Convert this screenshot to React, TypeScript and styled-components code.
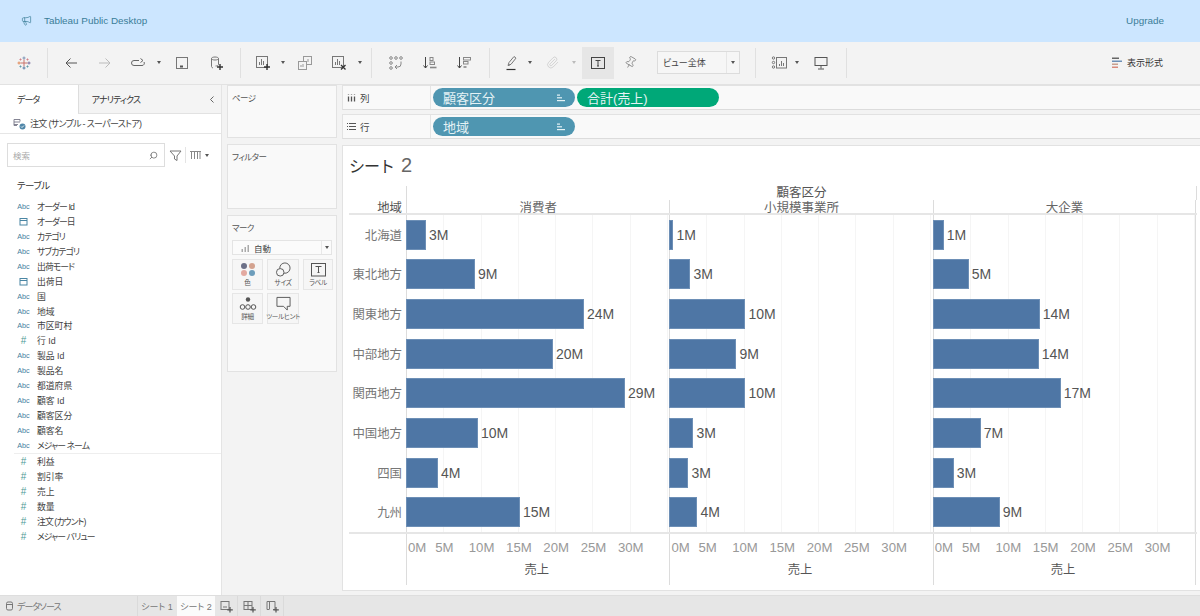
import React from 'react';
import styled, { createGlobalStyle } from 'styled-components';
import { Megaphone, Paperclip, Pin, Search } from 'lucide-react';

const CJK = `"Liberation Sans", "Noto Sans CJK JP", sans-serif`;

const GlobalStyle = createGlobalStyle`
  html, body {
    margin: 0;
    width: 1200px;
    height: 616px;
    overflow: hidden;
    background: #f3f3f3;
    font-family: ${CJK};
    font-feature-settings: "palt" 1;
  }
  * { box-sizing: border-box; }
`;

const Page = styled.div`
  display: grid;
  grid-template-rows: 42px 43px 510px 21px;
  width: 1200px;
  height: 616px;
`;

const TopBar = styled.div`
  display: flex;
  align-items: center;
  justify-content: space-between;
  padding: 0 36px 1px 21px;
  background: #cce6ff;
  color: #3a7d98;
  font-size: 9.9px;
`;

const TopBrand = styled.div`
  display: flex;
  align-items: center;
  gap: 12px;
`;

const Toolbar = styled.div`
  display: flex;
  align-items: center;
  padding: 0 37px 1px 7px;
  background: #f3f3f3;
  border-bottom: 1px solid #e2e2e2;
`;

const ToolButton = styled.div<{ $w?: number; $ml?: number; $active?: boolean }>`
  display: flex;
  align-items: center;
  justify-content: center;
  flex: none;
  width: ${(p) => p.$w ?? 34}px;
  height: 32px;
  margin-left: ${(p) => p.$ml ?? 0}px;
  background: ${(p) => (p.$active ? '#e6e6e6' : 'transparent')};
  color: #666;
`;

const ToolSep = styled.div<{ $w: number }>`
  flex: none;
  width: ${(p) => p.$w}px;
  height: 30px;
  display: flex;
  justify-content: center;

  &::before {
    content: '';
    width: 1px;
    background: #e0e0e0;
  }
`;

const Caret = styled.span<{ $light?: boolean }>`
  width: 0;
  height: 0;
  border-left: 2px solid transparent;
  border-right: 2px solid transparent;
  border-top: 3px solid ${(p) => (p.$light ? '#bbb' : '#555')};
`;

const CaretCell = styled.div<{ $w: number }>`
  display: flex;
  align-items: center;
  justify-content: center;
  flex: none;
  width: ${(p) => p.$w}px;
`;

const ViewSelect = styled.div`
  display: flex;
  align-items: center;
  justify-content: space-between;
  flex: none;
  width: 83px;
  height: 23px;
  margin-left: 11px;
  padding-left: 5px;
  border: 1px solid #dcdcdc;
  background: #f6f6f6;
  color: #444;
  font-size: 9px;
`;

const ViewSelectArrow = styled.div`
  display: flex;
  align-items: center;
  justify-content: center;
  width: 13px;
  height: 100%;
  border-left: 1px solid #e6e6e6;
`;

const FormatButton = styled.div`
  display: flex;
  align-items: center;
  gap: 5px;
  margin-left: auto;
  color: #333;
  font-size: 9px;
`;

const Body = styled.div`
  display: flex;
  gap: 5px;
  min-height: 0;
`;

const DataPane = styled.div`
  display: flex;
  flex-direction: column;
  flex: none;
  width: 222px;
  background: #fff;
  border-right: 1px solid #e4e4e4;
`;

const TabRow = styled.div`
  display: flex;
  flex: none;
  height: 29px;
`;

const PaneTab = styled.div<{ $active?: boolean }>`
  display: flex;
  align-items: center;
  justify-content: space-between;
  width: ${(p) => (p.$active ? '78px' : '144px')};
  padding: ${(p) => (p.$active ? '0 0 0 17px' : '0 5px 0 13px')};
  background: ${(p) => (p.$active ? '#fff' : '#f4f4f4')};
  border-left: ${(p) => (p.$active ? 'none' : '1px solid #ddd')};
  border-bottom: ${(p) => (p.$active ? 'none' : '1px solid #e2e2e2')};
  color: #333;
  font-size: 9px;
  letter-spacing: -0.9px;
`;

const SourceRow = styled.div`
  display: flex;
  align-items: center;
  gap: 4px;
  flex: none;
  height: 20px;
  padding-left: 13px;
  border-bottom: 1px solid #e6e6e6;
  color: #444;
  font-size: 9px;
  letter-spacing: -0.7px;
`;

const SearchRow = styled.div`
  display: flex;
  align-items: center;
  margin-top: 9px;
  padding-left: 7px;
  flex: none;
  color: #777;
`;

const SearchBox = styled.div`
  display: flex;
  align-items: center;
  justify-content: space-between;
  width: 158px;
  height: 24px;
  padding: 0 6px 0 5px;
  border: 1px solid #ddd;
  color: #aaa;
  font-size: 8.5px;
`;

const SearchTools = styled.div`
  display: flex;
  align-items: center;
  margin-left: 4px;
`;

const SearchDivider = styled.div`
  width: 1px;
  height: 16px;
  margin: 0 4px 0 3px;
  background: #e4e4e4;
`;

const TableHeading = styled.div`
  margin: 12px 0 7px 17px;
  color: #333;
  font-size: 9.5px;
  line-height: 13px;
  letter-spacing: -0.5px;
`;

const FieldList = styled.div`
  display: flex;
  flex-direction: column;
`;

const FieldRow = styled.div<{ $kana: boolean }>`
  display: flex;
  align-items: center;
  height: 14.95px;
  padding-left: 15px;
  color: #444;
  font-size: 8.8px;
  letter-spacing: ${(p) => (p.$kana ? '-0.9px' : '0')};
  white-space: nowrap;
`;

const TypeMark = styled.span<{ $kind: string }>`
  display: flex;
  align-items: center;
  justify-content: center;
  flex: none;
  width: 17px;
  margin-right: 5px;
  color: ${(p) => (p.$kind === 'num' ? '#4f9b97' : '#3f7fa0')};
  font-size: ${(p) => (p.$kind === 'num' ? '10px' : '7.2px')};
  letter-spacing: 0;
`;

const FieldDivider = styled.div`
  height: 1px;
  margin: 0 0 0 14px;
  background: #eeeeee;
`;

const ShelfColumn = styled.div`
  display: flex;
  flex-direction: column;
  flex: none;
  width: 110px;
`;

const ShelfCard = styled.div<{ $h: number; $mt?: number }>`
  flex: none;
  height: ${(p) => p.$h}px;
  margin-top: ${(p) => p.$mt ?? 0}px;
  padding: 5px 4px;
  background: #f9f9f9;
  border: 1px solid #e2e2e2;
  color: #555;
  font-size: 8.5px;
  letter-spacing: -0.6px;
`;

const MarkSelect = styled.div`
  display: flex;
  align-items: center;
  height: 15px;
  margin-top: 7px;
  padding-left: 8px;
  gap: 4px;
  background: #fbfbfb;
  border: 1px solid #e4e4e4;
  color: #444;
  font-size: 8.5px;
  letter-spacing: 0;
`;

const MarkSelectArrow = styled.div`
  display: flex;
  align-items: center;
  justify-content: center;
  width: 10px;
  height: 100%;
  margin-left: auto;
  border-left: 1px solid #e8e8e8;
`;

const MarkGrid = styled.div`
  display: grid;
  grid-template-columns: 31px 32px 30px;
  grid-auto-rows: 31px;
  gap: 3px 4px;
  margin-top: 4px;
`;

const MarkButton = styled.div`
  display: flex;
  flex-direction: column;
  align-items: center;
  justify-content: space-between;
  padding: 2px 0;
  background: #f6f6f6;
  border: 1px solid #e6e6e6;
  color: #555;
  font-size: 6.6px;
  letter-spacing: -0.3px;
  white-space: nowrap;
`;

const ViewColumn = styled.div`
  display: flex;
  flex-direction: column;
  flex: 1;
  min-width: 0;
`;

const ColumnShelf = styled.div<{ $mt?: number; $h: number }>`
  display: flex;
  align-items: center;
  flex: none;
  height: ${(p) => p.$h}px;
  margin-top: ${(p) => p.$mt ?? 0}px;
  background: #f9f9f9;
  border-top: 1px solid #e2e2e2;
  border-bottom: 1px solid #dcdcdc;
  border-left: 1px solid #e2e2e2;
`;

const ShelfLabel = styled.div`
  display: flex;
  align-items: center;
  gap: 4px;
  flex: none;
  width: 88px;
  height: 100%;
  padding-left: 4px;
  border-right: 1px solid #e4e4e4;
  color: #444;
  font-size: 9.5px;
`;

const Pills = styled.div`
  display: flex;
  gap: 2px;
  margin-left: 2px;
`;

const Pill = styled.div<{ $green?: boolean }>`
  display: flex;
  align-items: center;
  justify-content: space-between;
  width: 142px;
  height: 19px;
  padding: 0 10px;
  border-radius: 10px;
  background: ${(p) => (p.$green ? '#00a878' : '#4f96b1')};
  color: #e4f2f5;
  font-size: 13px;
  font-feature-settings: normal;
`;

const ChartCard = styled.div`
  display: flex;
  flex-direction: column;
  flex: none;
  height: 446px;
  margin-top: 6px;
  padding-left: 6px;
  background: #fff;
  border: 1px solid #e2e2e2;
  border-right: none;
`;

const SheetTitle = styled.div`
  display: flex;
  align-items: baseline;
  flex: none;
  height: 40px;
  padding-top: 7px;
  color: #333;
  font-size: 16px;
  font-feature-settings: normal;
  line-height: 24px;
  letter-spacing: -1px;
`;

const SheetNumber = styled.span`
  margin-left: 7px;
  color: #666;
  font-size: 20px;
  font-weight: 400;
`;

const ChartHead = styled.div`
  flex: none;
  height: 14px;
  margin-left: 57px;
  width: 791px;
  border-left: 1px solid #dcdcdc;
  border-right: 1px solid #dcdcdc;
  color: #555;
  font-size: 12.5px;
  font-feature-settings: normal;
  line-height: 14px;
  text-align: center;
`;

const ChartRow = styled.div<{ $h: number; $line?: 'top' | 'bottom' }>`
  display: flex;
  flex: none;
  width: 848px;
  height: ${(p) => p.$h}px;
  border-bottom: ${(p) => (p.$line === 'bottom' ? '2px solid #e6e6e6' : 'none')};
  border-top: ${(p) => (p.$line === 'top' ? '2px solid #e6e6e6' : 'none')};
`;

const RowLabel = styled.div<{ $strong?: boolean }>`
  display: flex;
  align-items: center;
  justify-content: flex-end;
  flex: none;
  width: 57px;
  padding-right: 4px;
  color: ${(p) => (p.$strong ? '#555' : '#777')};
  font-size: 12.4px;
  font-feature-settings: normal;
`;

const Pane = styled.div`
  display: flex;
  align-items: center;
  flex: none;
  width: 263.4px;
  border-left: 1px solid #dcdcdc;
  background: repeating-linear-gradient(
    to right,
    transparent 0 36.3px,
    #f5f5f5 36.3px 37.3px
  );

  &:last-child {
    border-right: 1px solid #dcdcdc;
  }
`;

const PaneHeader = styled(Pane)`
  justify-content: center;
  background: none;
  color: #666;
  font-size: 12.5px;
  font-feature-settings: normal;
`;

const Bar = styled.div`
  flex: none;
  height: 30px;
  margin-left: -1px;
  background: #4e76a5;
  box-shadow: inset 0 0 0 1px #6d8fb6;
`;

const BarValue = styled.span`
  margin-left: 3px;
  color: #555;
  font-size: 14px;
`;

const AxisPane = styled.div`
  display: flex;
  flex-direction: column;
  flex: none;
  width: 263.4px;
  border-left: 1px solid #dcdcdc;

  &:last-child {
    border-right: 1px solid #dcdcdc;
  }
`;

const Ticks = styled.div`
  display: flex;
  height: 26px;
  padding-top: 4px;
  color: #999;
  font-size: 13.2px;
  line-height: 20px;
  white-space: nowrap;
`;

const FirstTick = styled.span`
  flex: none;
  width: 18.65px;
  padding-left: 1px;
`;

const Tick = styled.span`
  flex: none;
  width: 37.3px;
  text-align: center;
`;

const AxisTitle = styled.div`
  margin-top: 1px;
  padding-right: 3px;
  color: #555;
  font-size: 12.3px;
  font-feature-settings: normal;
  line-height: 18px;
  text-align: center;
`;

const StatusBar = styled.div`
  display: flex;
  align-items: stretch;
  background: #e6e6e6;
  border-top: 1px solid #dedede;
  color: #777;
  font-size: 9px;
`;

const SourceTab = styled.div`
  display: flex;
  align-items: center;
  gap: 3px;
  flex: none;
  width: 138px;
  padding-left: 5px;
  border-right: 1px solid #dadada;
  letter-spacing: -0.9px;
`;

const SheetTab = styled.div<{ $active?: boolean }>`
  display: flex;
  align-items: center;
  justify-content: center;
  flex: none;
  width: 38px;
  margin-right: ${(p) => (p.$active ? 0 : 1)}px;
  background: ${(p) => (p.$active ? '#fbfbfb' : 'transparent')};
`;

const AddTab = styled.div`
  display: flex;
  align-items: center;
  justify-content: center;
  flex: none;
  width: 23px;
  border-right: 1px solid #dadada;
`;

const Line: React.FC<React.PropsWithChildren<{ w?: number; h?: number; color?: string }>> = ({
  w = 16,
  h = 16,
  color = '#666',
  children,
}) => (
  <svg width={w} height={h} viewBox={`0 0 ${w} ${h}`} fill="none" stroke={color} strokeWidth="1">
    {children}
  </svg>
);

const LogoIcon = () => (
  <svg width="14" height="14" viewBox="0 0 14 14" fill="none" strokeWidth="1">
    <path d="M7 3.5v7M3.5 7h7" stroke="#c9736b" />
    <path d="M7 .5v3M5.5 2h3" stroke="#7b93b5" />
    <path d="M7 10.5v3M5.5 12h3" stroke="#5a7fa8" />
    <path d="M.5 7h3M2 5.5v3" stroke="#e08a5a" />
    <path d="M10.5 7h3M12 5.5v3" stroke="#7a6f9f" />
    <path d="M2.5 3.5h2M3.5 2.5v2M9.5 3.5h2M10.5 2.5v2" stroke="#d27f86" />
    <path d="M2.5 10.5h2M3.5 9.5v2M9.5 10.5h2M10.5 9.5v2" stroke="#5e9ba6" />
  </svg>
);

const BackIcon = () => (
  <Line color="#555">
    <path d="M14 8H3M7.5 3.5 3 8l4.5 4.5" />
  </Line>
);

const ForwardIcon = () => (
  <Line color="#bbb">
    <path d="M2 8h11M8.5 3.5 13 8l-4.5 4.5" />
  </Line>
);

const LoopIcon = () => (
  <Line>
    <path d="M9 5.5H4a2.3 2.3 0 0 0 0 5h8a2.3 2.3 0 0 0 2-3.5M10.5 3.5 13 5.5l-2.5 2" />
  </Line>
);

const SaveIcon = () => (
  <Line color="#777">
    <rect x="2.5" y="2.5" width="11" height="11" />
    <rect x="6" y="10.5" width="3" height="2" fill="#555" stroke="none" />
  </Line>
);

const NewDataIcon = () => (
  <Line color="#777">
    <path d="M3.5 3.5c0-2 7-2 7 0v6c0 1-1.5 1.5-3 1.5M3.5 3.5v8c0 .8.7 1.2 1.5 1.4M3.5 3.5c0 2 7 2 7 0" />
    <path d="M12 9v6M9 12h6" stroke="#333" strokeWidth="1.4" />
  </Line>
);

const NewSheetIcon = () => (
  <Line color="#777">
    <rect x="1.5" y="1.5" width="11" height="11" />
    <path d="M4.5 10V7M6.5 10V4M8.5 10V6" />
    <path d="M12 9v6M9 12h6" stroke="#333" strokeWidth="1.4" />
  </Line>
);

const DuplicateIcon = () => (
  <Line color="#999">
    <rect x="6.5" y="1.5" width="8" height="8" />
    <rect x="1.5" y="6.5" width="8" height="8" fill="#f3f3f3" />
    <path d="M4 12V10M6 12V9M11 7V4" />
  </Line>
);

const ClearIcon = () => (
  <Line color="#777">
    <rect x="1.5" y="1.5" width="11" height="11" />
    <path d="M4.5 10V7M6.5 10V4M8.5 10V6" />
    <path d="m10 10 4.5 4.5M14.5 10 10 14.5" stroke="#333" strokeWidth="1.3" />
  </Line>
);

const GroupIcon = () => (
  <Line color="#888">
    <circle cx="3" cy="3" r="1.3" />
    <circle cx="8" cy="3" r="1.3" />
    <circle cx="13" cy="3" r="1.3" />
    <circle cx="3" cy="8" r="1.3" />
    <circle cx="3" cy="13" r="1.3" />
    <path d="M13 6.5V9a3 3 0 0 1-3 3H7M9 10l-2 2 2 2" />
  </Line>
);

const SortAscIcon = () => (
  <Line color="#888">
    <path d="M3.5 2v11M1.5 10.5l2 2.5 2-2.5" stroke="#444" />
    <rect x="8" y="2.5" width="3" height="3" />
    <rect x="8" y="7" width="4.5" height="2.5" />
    <path d="M8 12.5h6.5" strokeWidth="1.6" />
  </Line>
);

const SortDescIcon = () => (
  <Line color="#888">
    <path d="M3.5 2v11M1.5 10.5l2 2.5 2-2.5" stroke="#444" />
    <rect x="7.5" y="2.5" width="7" height="2.5" />
    <rect x="7.5" y="6.5" width="4.5" height="2.5" />
    <path d="M7.5 12h3" strokeWidth="1.6" />
  </Line>
);

const HighlightIcon = () => (
  <Line color="#777">
    <path d="m4 10.5 1-3 5-6 2 1.6-5 6.2zM4 10.5l3-1.2" />
    <path d="M2.5 14.5h9" stroke="#333" strokeWidth="1.2" />
  </Line>
);

const TextBoxIcon = () => (
  <Line color="#444">
    <rect x="1.5" y="2.5" width="13" height="11" />
    <path d="M5.5 5.5h5M8 5.5V11M7 11h2" />
  </Line>
);

const CardsIcon = () => (
  <Line color="#777">
    <circle cx="2.5" cy="3" r="1.2" />
    <circle cx="2.5" cy="7.5" r="1.2" />
    <circle cx="2.5" cy="12" r="1.2" />
    <rect x="5.5" y="2.5" width="10" height="10.5" />
    <path d="M8.5 11V9M10.5 11V6M12.5 11V8" />
  </Line>
);

const PresentIcon = () => (
  <Line color="#555">
    <rect x="2" y="2.5" width="12" height="8" />
    <path d="M8 10.5v3M5 14h6" />
  </Line>
);

const FormatIcon = () => (
  <svg width="10" height="12" viewBox="0 0 10 12">
    <rect y="0.5" width="7" height="1.5" fill="#666" />
    <rect y="3.5" width="10" height="1.5" fill="#6d8fb6" />
    <rect y="6.5" width="6" height="1.5" fill="#c9a08f" />
    <rect y="9.5" width="6" height="1.5" fill="#d98a7c" />
  </svg>
);

const SourceIcon = () => (
  <svg width="13" height="13" viewBox="0 0 13 13" fill="none" stroke="#778" strokeWidth="0.9">
    <path d="M1 2.5h6M1 5h6M1 7.5h4M1 2.5v6h3M7 2.5v2" />
    <circle cx="9.5" cy="9.5" r="3" fill="#4f86a8" stroke="none" />
    <path d="m8 9.5 1 1 2-2" stroke="#fff" />
  </svg>
);

const FilterIcon = () => (
  <Line w={13} h={13} color="#777">
    <path d="M1 2h11L8 7v4.5L5.5 10V7z" />
  </Line>
);

const ColumnsIcon = () => (
  <Line w={11} h={10} color="#888">
    <path d="M1.5 1v8M4.5 1v8M7.5 1v8M10 1v8" />
    <path d="M0 1.5h11" />
  </Line>
);

const CalendarIcon = () => (
  <Line w={9} h={9} color="#4a86a4">
    <rect x="1" y="1.5" width="7" height="6.5" />
    <path d="M1 3.5h7" />
  </Line>
);

const ColumnShelfIcon = () => (
  <Line w={9} h={9} color="#555">
    <path d="M1.5 1.5V2M1.5 3.5v5M4.5 1.5V2M4.5 3.5v5M7.5 1.5V2M7.5 3.5v5" strokeWidth="1.3" />
  </Line>
);

const RowShelfIcon = () => (
  <Line w={9} h={9} color="#555">
    <path d="M0 1.5h1M2 1.5h7M0 4.5h1M2 4.5h7M0 7.5h1M2 7.5h7" strokeWidth="1.1" />
  </Line>
);

const PillSortIcon = () => (
  <svg width="8" height="8" viewBox="0 0 8 8" fill="#e4f2f5">
    <rect width="3" height="1.2" y="0.5" />
    <rect width="5" height="1.2" y="3.2" />
    <rect width="8" height="1.2" y="6" />
  </svg>
);

const MiniBarsIcon = () => (
  <svg width="9" height="8" viewBox="0 0 9 8" fill="#aaa">
    <rect x="0.5" y="5" width="1.5" height="3" />
    <rect x="3.5" y="3" width="1.5" height="5" />
    <rect x="6.5" y="1" width="1.5" height="7" />
  </svg>
);

const ColorMarkIcon = () => (
  <svg width="16" height="15" viewBox="0 0 16 15">
    <circle cx="4" cy="4" r="3" fill="#6c7088" />
    <circle cx="12" cy="4" r="3" fill="#d3a28f" />
    <circle cx="4" cy="11" r="3" fill="#e3a9a0" />
    <circle cx="12" cy="11" r="3" fill="#6d9dbb" />
  </svg>
);

const SizeMarkIcon = () => (
  <Line w={17} h={16} color="#555">
    <circle cx="10" cy="6.5" r="5.5" />
    <circle cx="5" cy="11" r="4" fill="#f6f6f6" />
  </Line>
);

const LabelMarkIcon = () => (
  <Line w={17} h={15} color="#555">
    <rect x="1.5" y="1.5" width="14" height="12.5" />
    <path d="M5.5 4.5h6M8.5 4.5v6M7.5 10.5h2" />
  </Line>
);

const DetailMarkIcon = () => (
  <Line w={18} h={15} color="#555">
    <circle cx="9" cy="3.5" r="2.2" fill="#555" stroke="none" />
    <circle cx="3.5" cy="11" r="2.3" />
    <circle cx="9" cy="11" r="2.3" />
    <circle cx="14.5" cy="11" r="2.3" />
  </Line>
);

const TooltipMarkIcon = () => (
  <Line w={17} h={16} color="#555">
    <path d="M1.5 1.5h14V11h-3v4l-4-4h-7z" />
  </Line>
);

const SmallDbIcon = () => (
  <Line w={9} h={10} color="#777">
    <rect x="1.5" y="1" width="6" height="8" rx="1.5" />
    <path d="M1.5 3.5h6" />
  </Line>
);

const AddSheetIcon = () => (
  <Line w={13} h={13} color="#777">
    <rect x="1" y="1.5" width="8" height="8" />
    <path d="M3 7h4" />
    <path d="M10 7v5.5M7.3 9.8h5.5" stroke="#555" strokeWidth="1.2" />
  </Line>
);

const AddDashIcon = () => (
  <Line w={13} h={13} color="#777">
    <rect x="1" y="1.5" width="8" height="8" />
    <path d="M5 1.5v8M1 5.5h8" />
    <path d="M10 7v5.5M7.3 9.8h5.5" stroke="#555" strokeWidth="1.2" />
  </Line>
);

const AddStoryIcon = () => (
  <Line w={13} h={13} color="#777">
    <path d="M1 1.5h8v8H7M1 1.5v8h2M3.5 1.5v8" />
    <path d="M10 7v5.5M7.3 9.8h5.5" stroke="#555" strokeWidth="1.2" />
  </Line>
);

type Field = { type: 'abc' | 'date' | 'num'; name: string };

const dimensions: Field[] = [
  { type: 'abc', name: 'オーダー Id' },
  { type: 'date', name: 'オーダー日' },
  { type: 'abc', name: 'カテゴリ' },
  { type: 'abc', name: 'サブカテゴリ' },
  { type: 'abc', name: '出荷モード' },
  { type: 'date', name: '出荷日' },
  { type: 'abc', name: '国' },
  { type: 'abc', name: '地域' },
  { type: 'abc', name: '市区町村' },
  { type: 'num', name: '行 Id' },
  { type: 'abc', name: '製品 Id' },
  { type: 'abc', name: '製品名' },
  { type: 'abc', name: '都道府県' },
  { type: 'abc', name: '顧客 Id' },
  { type: 'abc', name: '顧客区分' },
  { type: 'abc', name: '顧客名' },
  { type: 'abc', name: 'メジャー ネーム' },
];

const measures: Field[] = [
  { type: 'num', name: '利益' },
  { type: 'num', name: '割引率' },
  { type: 'num', name: '売上' },
  { type: 'num', name: '数量' },
  { type: 'num', name: '注文 (カウント)' },
  { type: 'num', name: 'メジャー バリュー' },
];

const regions = ['北海道', '東北地方', '関東地方', '中部地方', '関西地方', '中国地方', '四国', '九州'];

const segments = ['消費者', '小規模事業所', '大企業'];

// bar length in px, label
const bars: [number, string][][] = [
  [[20, '3M'], [4, '1M'], [11, '1M']],
  [[69, '9M'], [21, '3M'], [36, '5M']],
  [[178, '24M'], [76, '10M'], [107, '14M']],
  [[147, '20M'], [67, '9M'], [106, '14M']],
  [[219, '29M'], [76, '10M'], [128, '17M']],
  [[72, '10M'], [24, '3M'], [48, '7M']],
  [[32, '4M'], [19, '3M'], [21, '3M']],
  [[114, '15M'], [28, '4M'], [67, '9M']],
];

const FieldItem: React.FC<{ field: Field }> = ({ field }) => (
  <FieldRow $kana={/[ァ-ヶー]/.test(field.name)}>
    <TypeMark $kind={field.type}>
      {field.type === 'abc' && 'Abc'}
      {field.type === 'date' && <CalendarIcon />}
      {field.type === 'num' && '#'}
    </TypeMark>
    {field.name}
  </FieldRow>
);

const App: React.FC = () => {
  return (
    <Page>
      <GlobalStyle />
      <TopBar>
        <TopBrand>
          <Megaphone size={11} strokeWidth={1.5} />
          <span>Tableau Public Desktop</span>
        </TopBrand>
        <span>Upgrade</span>
      </TopBar>

      <Toolbar>
        <ToolButton><LogoIcon /></ToolButton>
        <ToolSep $w={13} />
        <ToolButton><BackIcon /></ToolButton>
        <ToolButton><ForwardIcon /></ToolButton>
        <ToolButton $w={32}><LoopIcon /></ToolButton>
        <CaretCell $w={10}><Caret /></CaretCell>
        <ToolButton $ml={1}><SaveIcon /></ToolButton>
        <ToolButton><NewDataIcon /></ToolButton>
        <ToolSep $w={14} />
        <ToolButton $w={32}><NewSheetIcon /></ToolButton>
        <CaretCell $w={8}><Caret /></CaretCell>
        <ToolButton $ml={1}><DuplicateIcon /></ToolButton>
        <ToolButton><ClearIcon /></ToolButton>
        <CaretCell $w={8}><Caret /></CaretCell>
        <ToolSep $w={15} />
        <ToolButton><GroupIcon /></ToolButton>
        <ToolButton><SortAscIcon /></ToolButton>
        <ToolButton><SortDescIcon /></ToolButton>
        <ToolSep $w={16} />
        <ToolButton $w={30}><HighlightIcon /></ToolButton>
        <CaretCell $w={6}><Caret /></CaretCell>
        <ToolButton $w={38}><Paperclip size={13} strokeWidth={1} color="#bbb" /></ToolButton>
        <CaretCell $w={6}><Caret $light /></CaretCell>
        <ToolButton $w={32} $ml={5} $active><TextBoxIcon /></ToolButton>
        <ToolButton $w={32}><Pin size={13} strokeWidth={1} color="#555" style={{ transform: 'rotate(30deg)' }} /></ToolButton>
        <ViewSelect>
          ビュー全体
          <ViewSelectArrow><Caret /></ViewSelectArrow>
        </ViewSelect>
        <ToolSep $w={31} />
        <ToolButton $w={16}><CardsIcon /></ToolButton>
        <CaretCell $w={20}><Caret /></CaretCell>
        <ToolButton $w={28}><PresentIcon /></ToolButton>
        <ToolSep $w={22} />
        <FormatButton>
          <FormatIcon />
          表示形式
        </FormatButton>
      </Toolbar>

      <Body>
        <DataPane>
          <TabRow>
            <PaneTab $active>データ</PaneTab>
            <PaneTab>
              アナリティクス
              <Line w={8} h={9} color="#666"><path d="M5.5 1.5 2.5 4.5l3 3" /></Line>
            </PaneTab>
          </TabRow>
          <SourceRow>
            <SourceIcon />
            注文 (サンプル - スーパーストア)
          </SourceRow>
          <SearchRow>
            <SearchBox>
              検索
              <Search size={9} color="#666" style={{ transform: 'scaleX(-1)' }} />
            </SearchBox>
            <SearchTools>
              <FilterIcon />
              <SearchDivider />
              <ColumnsIcon />
              <CaretCell $w={12}><Caret /></CaretCell>
            </SearchTools>
          </SearchRow>
          <TableHeading>テーブル</TableHeading>
          <FieldList>
            {dimensions.map((f) => <FieldItem key={f.name} field={f} />)}
            <FieldDivider />
            {measures.map((f) => <FieldItem key={f.name} field={f} />)}
          </FieldList>
        </DataPane>

        <ShelfColumn>
          <ShelfCard $h={53}>ページ</ShelfCard>
          <ShelfCard $h={65} $mt={6}>フィルター</ShelfCard>
          <ShelfCard $h={157} $mt={6}>
            マーク
            <MarkSelect>
              <MiniBarsIcon />
              自動
              <MarkSelectArrow><Caret /></MarkSelectArrow>
            </MarkSelect>
            <MarkGrid>
              <MarkButton><ColorMarkIcon />色</MarkButton>
              <MarkButton><SizeMarkIcon />サイズ</MarkButton>
              <MarkButton><LabelMarkIcon />ラベル</MarkButton>
              <MarkButton><DetailMarkIcon />詳細</MarkButton>
              <MarkButton><TooltipMarkIcon />ツールヒント</MarkButton>
            </MarkGrid>
          </ShelfCard>
        </ShelfColumn>

        <ViewColumn>
          <ColumnShelf $h={25}>
            <ShelfLabel><ColumnShelfIcon />列</ShelfLabel>
            <Pills>
              <Pill>顧客区分<PillSortIcon /></Pill>
              <Pill $green>合計(売上)</Pill>
            </Pills>
          </ColumnShelf>
          <ColumnShelf $h={25} $mt={4}>
            <ShelfLabel><RowShelfIcon />行</ShelfLabel>
            <Pills>
              <Pill>地域<PillSortIcon /></Pill>
            </Pills>
          </ColumnShelf>

          <ChartCard>
            <SheetTitle>シート<SheetNumber>2</SheetNumber></SheetTitle>
            <ChartHead>顧客区分</ChartHead>
            <ChartRow $h={15} $line="bottom">
              <RowLabel $strong>地域</RowLabel>
              {segments.map((s) => <PaneHeader key={s}>{s}</PaneHeader>)}
            </ChartRow>
            {regions.map((region, i) => (
              <ChartRow key={region} $h={39.66}>
                <RowLabel>{region}</RowLabel>
                {bars[i].map(([width, label], j) => (
                  <Pane key={j}>
                    <Bar style={{ width }} />
                    <BarValue>{label}</BarValue>
                  </Pane>
                ))}
              </ChartRow>
            ))}
            <ChartRow $h={53} $line="top">
              <RowLabel />
              {segments.map((s) => (
                <AxisPane key={s}>
                  <Ticks>
                    <FirstTick>0M</FirstTick>
                    {['5M', '10M', '15M', '20M', '25M', '30M'].map((t) => <Tick key={t}>{t}</Tick>)}
                  </Ticks>
                  <AxisTitle>売上</AxisTitle>
                </AxisPane>
              ))}
            </ChartRow>
          </ChartCard>
        </ViewColumn>
      </Body>

      <StatusBar>
        <SourceTab><SmallDbIcon />データソース</SourceTab>
        <SheetTab>シート 1</SheetTab>
        <SheetTab $active>シート 2</SheetTab>
        <AddTab><AddSheetIcon /></AddTab>
        <AddTab><AddDashIcon /></AddTab>
        <AddTab><AddStoryIcon /></AddTab>
      </StatusBar>
    </Page>
  );
};

export default App;
